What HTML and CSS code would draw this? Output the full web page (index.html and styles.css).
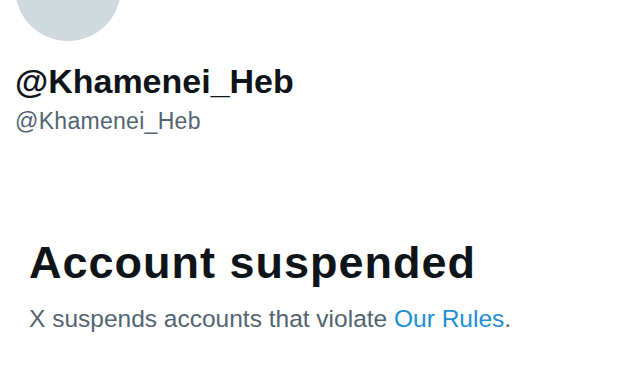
FILE: index.html
```html
<!DOCTYPE html>
<html lang="en">
<head>
<meta charset="utf-8">
<title>@Khamenei_Heb</title>
<link rel="stylesheet" href="styles.css">
</head>
<body>
<main class="page">
  <header class="profile">
    <div class="avatar"></div>
    <h1 class="name">@Khamenei_Heb</h1>
    <div class="handle">@Khamenei_Heb</div>
  </header>
  <section class="notice">
    <h2 class="title">Account suspended</h2>
    <p class="desc">X suspends accounts that violate <a class="link" href="#">Our Rules</a>.</p>
  </section>
</main>
</body>
</html>
```
FILE: styles.css
```css
html, body {
  margin: 0;
  padding: 0;
  background: #ffffff;
}
body {
  font-family: "Liberation Sans", Arial, sans-serif;
  color: #0f1419;
  overflow: hidden;
}
.page {
  width: 641px;
  height: 380px;
  display: flex;
  flex-direction: column;
}
.profile {
  display: flex;
  flex-direction: column;
  padding-left: 15px;
}
.avatar {
  width: 106px;
  height: 106px;
  margin-top: -65px;
  border-radius: 50%;
  background: #cfd9de;
}
.name {
  margin: 20px 0 0;
  font-size: 34px;
  line-height: 40px;
  font-weight: 700;
  color: #0f1419;
}
.handle {
  margin-top: 6px;
  font-size: 23px;
  line-height: 28px;
  letter-spacing: 0.3px;
  color: #536471;
}
.notice {
  padding-left: 29px;
  margin-top: 102px;
}
.title {
  margin: 0;
  font-size: 45px;
  line-height: 52px;
  font-weight: 700;
  letter-spacing: 1px;
  color: #0f1419;
}
.desc {
  margin: 15px 0 0;
  font-size: 24.5px;
  line-height: 30px;
  color: #536471;
}
.link {
  color: #1d8fd5;
  text-decoration: none;
}
```
